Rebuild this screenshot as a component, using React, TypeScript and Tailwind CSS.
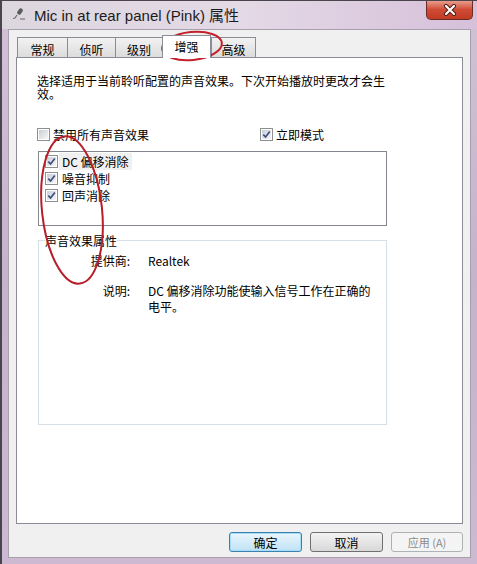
import React from "react";

type CheckProps = { checked?: boolean };

const Check: React.FC<CheckProps> = ({ checked }) => {
  return (
    <span className="w-[13px] h-[13px] shrink-0 border border-[#8e8f8f] bg-white p-[1px] flex">
      <span className="flex-1 flex items-center justify-center bg-gradient-to-br from-[#c9ced6] to-[#f6f7f8]">
        {checked && (
          <svg width="9" height="9" viewBox="0 0 9 9">
            <path d="M1.3 4.6 L3.6 7 L7.8 1.4" fill="none" stroke="#3d4f7e" strokeWidth="1.7" />
          </svg>
        )}
      </span>
    </span>
  );
};

const Tab: React.FC<{ label: string; w: string; selected?: boolean; last?: boolean }> = ({ label, w, selected, last }) => {
  if (selected) {
    return (
      <div className={`${w} h-[23px] -mb-px relative z-10 bg-white border border-b-0 border-[#898c95] flex justify-center pt-[4px]`}>
        {label}
      </div>
    );
  }
  return (
    <div
      className={`${w} h-[20px] border-t border-l ${last ? "border-r" : ""} border-[#898c95] bg-gradient-to-b from-[#f2f2f2] to-[#dcdcdc] flex justify-center pt-[5px]`}
    >
      {label}
    </div>
  );
};

export default function App() {
  return (
    <div className="w-[477px] h-[564px] overflow-hidden relative flex flex-col border-l-2 border-t border-[#4a444d] bg-gradient-to-b from-[#d2c2d6] via-[#c7b2cc] to-[#cdb9d2] font-['Noto_Sans_CJK_SC',sans-serif] text-[12px] leading-[13px] text-black">
      {/* title bar */}
      <div className="h-[28px] shrink-0 flex items-start bg-gradient-to-r from-[#dcd6de] via-[#e4d9e6] to-[#d6c0da]">
        <svg width="16" height="16" viewBox="0 0 16 16" className="ml-[9px] mt-[6px]">
          <rect x="7" y="1" width="4" height="7" rx="2" transform="rotate(35 9 4.5)" fill="#5b5b5b" />
          <path d="M6 8 L4 11 L2 11.5" stroke="#6a6a6a" strokeWidth="1.2" fill="none" />
          <path d="M9 12 L14 12" stroke="#7a7a7a" strokeWidth="1.2" />
        </svg>
        <span className="ml-[7px] mt-[7px] text-[15px] leading-[16px] text-[#1b1b1b] font-['Liberation_Sans','Noto_Sans_CJK_SC',sans-serif]">
          Mic in at rear panel (Pink) 属性
        </span>
        <div className="ml-auto mr-[4px] -mt-px w-[47px] h-[20px] rounded-b-[5px] border border-t-0 border-[#6b2b25] bg-gradient-to-b from-[#e9a596] via-[#cf4b36] to-[#c23b22] flex items-center justify-center">
          <svg width="14" height="12" viewBox="0 0 14 12">
            <path d="M3 2 L11 10 M11 2 L3 10" stroke="#4a1a14" strokeWidth="4" strokeLinecap="round" />
            <path d="M3 2 L11 10 M11 2 L3 10" stroke="#ffffff" strokeWidth="2.2" strokeLinecap="round" />
          </svg>
        </div>
      </div>

      {/* client area */}
      <div className="ml-[6px] w-[463px] h-[529px] shrink-0 border border-[#a89fae] bg-[#f0f0f0] flex flex-col px-[7px] pt-[5px]">
        <div className="h-[22px] flex items-end pl-px">
          <Tab label="常规" w="w-[50px]" />
          <Tab label="侦听" w="w-[48px]" />
          <Tab label="级别" w="w-[47px]" />
          <Tab label="增强" w="w-[49px]" selected />
          <Tab label="高级" w="w-[45px]" last />
        </div>

        <div className="h-[467px] bg-white border border-[#898c95] flex flex-col pl-[20px]">
          <p className="mt-[16px] w-[358px]">
            选择适用于当前聆听配置的声音效果。下次开始播放时更改才会生效。
          </p>

          <div className="mt-[27px] flex items-center h-[14px]">
            <div className="w-[223px] flex items-center gap-[3px]">
              <Check />
              <span>禁用所有声音效果</span>
            </div>
            <div className="flex items-center gap-[3px]">
              <Check checked />
              <span>立即模式</span>
            </div>
          </div>

          <div className="mt-[10px] ml-px w-[349px] h-[75px] border border-[#828790] pt-px pl-[6px] flex flex-col">
            <div className="h-[17px] flex items-center">
              <Check checked />
              <span className="ml-px h-[17px] px-[3px] flex items-center bg-[#f0f0f0]">DC 偏移消除</span>
            </div>
            <div className="h-[17px] flex items-center">
              <Check checked />
              <span className="ml-px px-[3px]">噪音抑制</span>
            </div>
            <div className="h-[17px] flex items-center">
              <Check checked />
              <span className="ml-px px-[3px]">回声消除</span>
            </div>
          </div>

          <fieldset className="mt-[8px] ml-px w-[349px] h-[191px] border border-[#d5dfe5] px-[6px]">
            <legend className="leading-[13px]">声音效果属性</legend>
            <div className="mt-[6px] grid grid-cols-[85px_1fr] gap-x-[18px] gap-y-[14px] leading-[16px]">
              <span className="text-right">提供商:</span>
              <span>Realtek</span>
              <span className="text-right">说明:</span>
              <span className="w-[228px]">DC 偏移消除功能使输入信号工作在正确的电平。</span>
            </div>
          </fieldset>
        </div>

        <div className="mt-[8px] flex justify-end gap-[8px]">
          <button className="w-[73px] h-[20px] rounded-[3px] border border-[#3c7fb1] bg-gradient-to-b from-[#eaf6fd] to-[#bfe2f6] shadow-[inset_0_0_0_1px_#a7dcf6] leading-[13px]">
            确定
          </button>
          <button className="w-[73px] h-[20px] rounded-[3px] border border-[#707070] bg-gradient-to-b from-[#f3f3f3] to-[#d8d8d8] leading-[13px]">
            取消
          </button>
          <button className="w-[72px] h-[20px] rounded-[3px] border border-[#adb2b5] bg-[#f4f4f4] text-[#8a8a8a] leading-[13px] text-[11px]">
            应用 (A)
          </button>
        </div>
      </div>

      {/* red hand-drawn annotation */}
      <svg className="absolute left-[-2px] top-[-1px] pointer-events-none" width="477" height="564" viewBox="0 0 477 564">
        <ellipse cx="192" cy="46" rx="30" ry="14" transform="rotate(-6 192 46)" fill="none" stroke="#c4202c" strokeWidth="2" />
        <ellipse cx="72" cy="210" rx="30" ry="74" transform="rotate(-6 72 210)" fill="none" stroke="#b81e2a" strokeWidth="2" />
      </svg>
    </div>
  );
}
